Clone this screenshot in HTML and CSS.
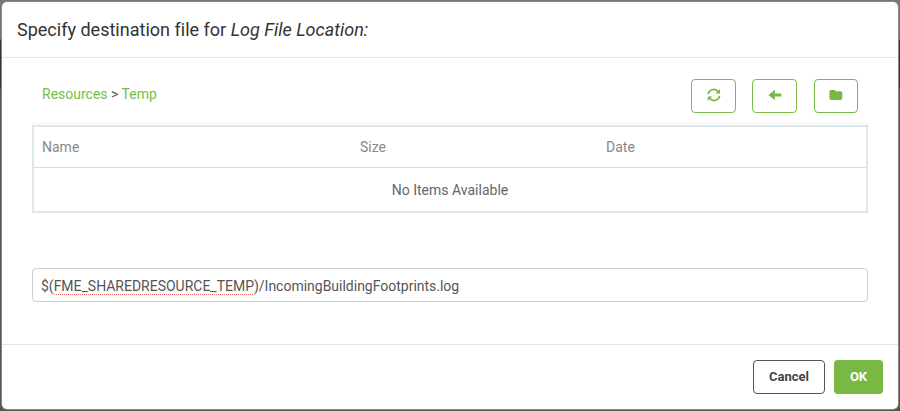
FILE: index.html
```html
<!DOCTYPE html>
<html lang="en">
<head>
<meta charset="utf-8">
<title>Specify destination file</title>
<link rel="stylesheet" href="styles.css">
</head>
<body>
<div class="modal">
  <header class="modal-header"><h1>Specify destination file for <em>Log File Location:</em></h1></header>
  <main class="modal-body">
    <div class="toolbar">
      <nav class="crumbs"><a>Resources</a> &gt; <a>Temp</a></nav>
      <div class="actions">
        <button class="tool"><svg width="14" height="14" viewBox="0 0 14 14"><path class="stroke" d="M1.200 6.100A5.600 5.400 0 0 1 10.900 3.300M12.600 7.900A5.600 5.400 0 0 1 2.900 10.700"/><path d="M13 1v4.500H8.500zM.8 13V8.500h4.500z"/></svg></button>
        <button class="tool back"><svg width="14" height="14" viewBox="0 0 14 14"><path d="M.4 7 6.900 1.800v3.600h6.400v3.200H6.900v3.600z"/></svg></button>
        <button class="tool last"><svg width="14" height="14" viewBox="0 0 14 14"><path d="M2.200 1.900h2.700c1 0 1.500.5 1.500 1.400h5.100c1.200 0 1.800.7 1.800 1.800v5c0 1.100-.7 1.800-1.800 1.800H2.200C1.100 11.900.4 11.200.4 10.100V3.700c0-1.100.7-1.800 1.800-1.800z"/></svg></button>
      </div>
    </div>
    <table class="files">
      <thead><tr><th class="name">Name</th><th class="size">Size</th><th>Date</th></tr></thead>
      <tbody><tr><td colspan="3">No Items Available</td></tr></tbody>
    </table>
    <div class="path-field">$(<span class="misspelled">FME_SHAREDRESOURCE_TEMP</span>)/IncomingBuildingFootprints.log</div>
  </main>
  <footer class="modal-footer">
    <button class="cancel">Cancel</button>
    <button class="ok">OK</button>
  </footer>
</div>
</body>
</html>
```
FILE: styles.css
```css
* { box-sizing: border-box; }
body {
  margin: 0;
  height: 411px;
  padding: 2px 2px 2px;
  overflow: hidden;
  background: linear-gradient(#777 0, #777 39px, #333 40px, #333 88px, #555 89px, #555 100%);
  font: 14px/20px Roboto, sans-serif;
  color: #555;
}
.modal {
  height: 407px;
  display: flex;
  flex-direction: column;
  background: #fff;
  border-radius: 5px;
  box-shadow: 0 0 0 1px #888;
}
.modal-header {
  height: 56px;
  padding: 16px 15px;
  border-bottom: 1px solid #e5e5e5;
}
h1 {
  margin: 0;
  font-size: 18px;
  line-height: 24px;
  font-weight: 400;
  letter-spacing: 0.01px;
  color: #333;
}
.modal-body {
  flex: 1;
  padding: 21px 30px 0;
}
.toolbar {
  height: 45px;
  display: flex;
  justify-content: space-between;
  border-bottom: 1px solid #f2f2f2;
}
.crumbs { padding: 5px 10px; }
.crumbs a { color: #78be43; }
.actions { display: flex; gap: 16px; padding-right: 10px; }
button { font: inherit; border-radius: 4px; padding: 0; }
.tool {
  width: 45px;
  height: 34px;
  display: flex;
  align-items: center;
  justify-content: center;
  padding-bottom: 2px;
  background: #fff;
  border: 1px solid #78be43;
}
.tool.back { margin-right: 1px; }
.tool.last { width: 44px; }
.tool svg { fill: #78b843; }
.tool .stroke { fill: none; stroke: #78b843; stroke-width: 1.7; }
.files {
  width: 836px;
  height: 88px;
  margin-top: 1px;
  table-layout: fixed;
  border-collapse: separate;
  border-spacing: 0;
  border: 2px solid #dce8ea;
}
.files th {
  height: 41px;
  padding: 0 8px;
  border-bottom: 1px solid #d9dfdf;
  text-align: left;
  font-weight: 400;
  color: #888;
}
.files .name { width: 318px; }
.files .size { width: 246px; }
.files td { padding: 0; text-align: center; color: #666; }
.path-field {
  height: 34px;
  margin-top: 55px;
  padding: 7px 8px 5px;
  border: 1px solid #ccc;
  border-radius: 4px;
  letter-spacing: -0.01px;
  color: #555;
}
.misspelled {
  padding-bottom: 1px;
  background: repeating-linear-gradient(90deg, #f56a62 0 1px, #fff 1px 2px) 0 100% / 100% 1px no-repeat;
}
.modal-footer {
  height: 65px;
  display: flex;
  justify-content: flex-end;
  gap: 9px;
  padding: 15px 15px 0;
  border-top: 1px solid #e5e5e5;
}
.modal-footer button { height: 34px; font-weight: 700; font-size: 13px; }
.cancel { width: 72px; background: #fff; border: 1px solid #555; color: #444; }
.ok { width: 49px; background: #78b843; border: 0; color: #fff; }
```
